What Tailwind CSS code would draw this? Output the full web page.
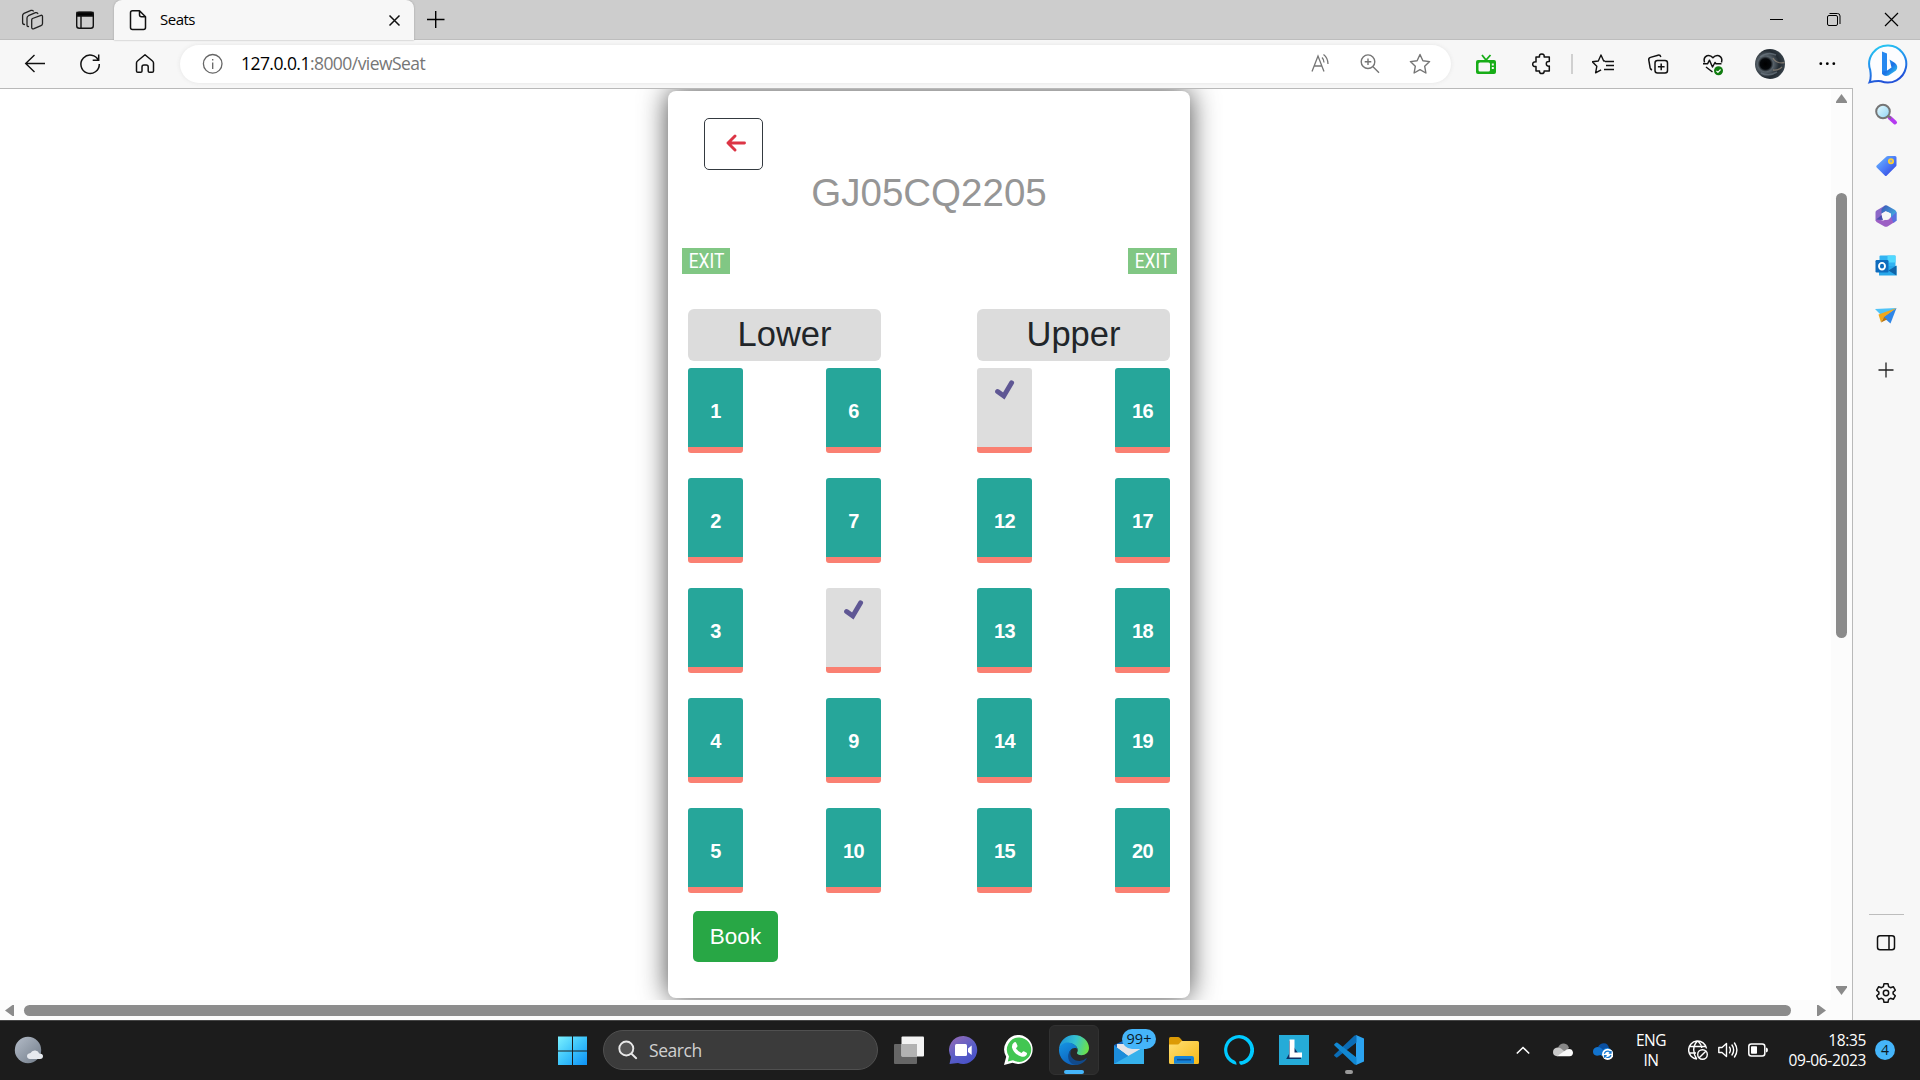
<!DOCTYPE html>
<html lang="en">
<head>
<meta charset="utf-8">
<title>Seats</title>
<script src="https://cdn.jsdelivr.net/npm/@tailwindcss/browser@4"></script>
</head>
<body class="w-[1920px] h-[1080px] overflow-hidden flex flex-col bg-[#f7f7f7] font-['Open_Sans','Noto_Sans',sans-serif] text-black">

<!-- Tab strip -->
<header class="h-10 shrink-0 flex items-center bg-[#cdcdcd] shadow-[inset_0_-1px_0_#bdbdbd]">
  <svg class="ml-5 size-6 shrink-0" viewBox="20 8 24 24" fill="none" stroke="#222" stroke-width="1.3" stroke-linejoin="round" stroke-linecap="round"><path d="M32.500 18.500 41 15.300Q42.500 15 42.500 16.500V23.500Q42.500 25 41 25.600L34 28.700Q31.700 29.300 31.700 27.500V20Q31.700 19 32.500 18.500ZM28.500 26.500Q27 26.800 27 25V18Q27 16.500 28.500 15.700L35.500 12.700Q37 12.200 37.800 13.500M24.500 24.500Q22.600 24.500 22.600 22.500V15.500Q22.600 14 24 13.300L31 10.400Q32.800 10 33.300 11"/></svg>
  <svg class="ml-[29px] size-6 shrink-0" viewBox="73 8 24 24" fill="none" stroke="#111" stroke-width="1.400"><rect x="76.700" y="12.200" width="16.600" height="16" rx="2.500"/><path d="M77 12.500h16v3.500H77z" fill="#000"/><path d="M81 16v12"/></svg>
  <div class="ml-[17px] w-[300px] h-10 flex items-center bg-[#f7f7f7] rounded-t-lg pl-3 pr-2 shadow-[0_0_2px_#999]">
    <svg class="size-6 shrink-0" viewBox="126 8 24 24" fill="none" stroke="#111" stroke-width="1.500" stroke-linejoin="round"><path d="M132.500 10.800h7l6 6V27.500q0 2-2 2h-11q-2 0-2-2V12.800q0-2 2-2ZM139.500 10.800v4q0 2 2 2h4"/></svg>
    <span class="ml-2.5 mb-0.5 text-[15px] leading-none tracking-[-0.5px]">Seats</span>
    <svg class="ml-auto size-6 shrink-0" viewBox="382 8 24 24" stroke="#111" stroke-width="1.500"><path d="m389.500 15.500 10 10m0-10-10 10"/></svg>
  </div>
  <svg class="ml-2.5 size-6 shrink-0" viewBox="424 8 24 24" stroke="#000" stroke-width="1.400"><path d="M427 19.500h17.500M435.700 11v17"/></svg>
  <div class="ml-auto mr-4 flex">
    <svg class="size-6" viewBox="1765 8 24 24" stroke="#000" stroke-width="1"><path d="M1770 19.500h13"/></svg>
    <svg class="ml-[33px] size-6" viewBox="1822 8 24 24" fill="none" stroke="#000" stroke-width="1"><rect x="1827.500" y="15.500" width="10" height="10" rx="1.500"/><path d="M1829.500 13.500h8q2.500 0 2.500 2.500v8"/></svg>
    <svg class="ml-[34px] size-6" viewBox="1880 8 24 24" stroke="#000" stroke-width="1.200"><path d="m1885 13 13 13m0-13-13 13"/></svg>
  </div>
</header>

<!-- Toolbar -->
<nav class="h-12 shrink-0 flex items-center pl-[23px]">
  <svg class="size-6 shrink-0" viewBox="23 52 24 24" fill="none" stroke="#111" stroke-width="1.400"><path d="M45 63.500H26M34.500 55l-8.800 8.500 8.800 8.500"/></svg>
  <svg class="ml-[31px] size-6 shrink-0" viewBox="78 52 24 24" fill="none" stroke="#111" stroke-width="1.500"><path d="M98.500 60.500A9.200 9.200 0 1 0 99.300 64M98.700 54.500v5.700h-6"/></svg>
  <svg class="ml-[31px] size-6 shrink-0" viewBox="133 52 24 24" fill="none" stroke="#111" stroke-width="1.500" stroke-linejoin="round"><path d="M145 54.700 137.500 61q-1 .8-1 2V71q0 1.300 1.300 1.300h3q1.200 0 1.200-1.300v-4q0-2 2-2h2.200q2 0 2 2v4q0 1.300 1.300 1.300h2.700q1.300 0 1.300-1.300v-8q0-1.200-1-2Z"/></svg>
  <div class="ml-[23px] w-[1271px] h-[38px] shrink-0 rounded-full bg-white flex items-center pl-[21px] pr-[19px] shadow-[0_0_4px_#e4e4e4]">
    <svg class="size-6 shrink-0" viewBox="201 52 24 24" fill="none" stroke="#666" stroke-width="1.300"><circle cx="212.700" cy="63.800" r="9.300"/><path d="M212.700 62.500v6.500M212.700 59v1.600"/></svg>
    <span class="ml-4 text-[17.500px] leading-none tracking-[-0.55px]">127.0.0.1<span class="text-[#767676]">:8000/viewSeat</span></span>
    <svg class="ml-auto size-6 shrink-0" viewBox="1309 52 24 24" fill="none" stroke="#757575" stroke-width="1.300"><path d="m1311.500 71.500 6-15.500 6 15.500M1313.700 66h7.600M1321.500 57.500q2 2 2 5M1323 54.500q4.500 3.500 4.500 9.500" transform="translate(.5 0)"/></svg>
    <svg class="ml-[25px] size-6 shrink-0" viewBox="1358 52 24 24" fill="none" stroke="#757575" stroke-width="1.400"><circle cx="1368" cy="61.700" r="6.800"/><path d="m1373 66.700 6 6M1368 58.500v6.500M1364.700 61.700h6.600"/></svg>
    <svg class="ml-[26px] size-6 shrink-0" viewBox="1408 52 24 24" fill="none" stroke="#757575" stroke-width="1.400" stroke-linejoin="round"><path d="m1420 54.500 2.900 6.200 6.700.9-4.900 4.700 1.200 6.700-5.900-3.300-5.900 3.300 1.200-6.700-4.900-4.700 6.700-.9Z"/></svg>
  </div>
  <svg class="ml-[23px] size-6 shrink-0" viewBox="1474 52 24 24"><path d="m1482 55 4 5 4.500-5" stroke="#17ad17" stroke-width="1.800" fill="none"/><rect x="1476" y="60" width="20" height="14" rx="2" fill="#17ad17"/><rect x="1478.500" y="62.500" width="11.500" height="9" rx="1.500" fill="#f7f7f7"/><path d="M1491.800 63.500h2v2h-2zm0 3.500h2v2h-2z" fill="#f7f7f7"/></svg>
  <svg class="ml-8 size-6 shrink-0" viewBox="1530 52 24 24" fill="none" stroke="#111" stroke-width="1.500" stroke-linejoin="round"><path d="M1536 57h3.500q-.6-3 2.300-3t2.300 3h5.200v4.500q-3-.3-3 2.300t3 2.300V71h-5.200q.3 2.500-2.300 2.500T1539.500 71H1536v-4.500q-3.300.3-3.300-2.300t3.300-2.300Z"/></svg>
  <i class="ml-[17px] w-0.5 h-5 shrink-0 bg-[#d0d0d0]"></i>
  <svg class="ml-[19px] size-6 shrink-0" viewBox="1592 52 24 24" fill="none" stroke="#111" stroke-width="1.400" stroke-linejoin="round"><path d="M1604.500 61h-1.300l-2.700-6-2.700 6-6 .8 4.500 4.500-1.200 6.500 5.500-3M1604.500 61.500h9M1605.500 65.500h8M1603.500 69.500h10" transform="translate(.5 0)"/></svg>
  <svg class="ml-[30px] size-6 shrink-0" viewBox="1646 52 24 24" fill="none" stroke="#111" stroke-width="1.500"><rect x="1655" y="60.500" width="12.500" height="12.500" rx="2.500"/><path d="M1661.200 63.500v6.700M1657.900 66.800h6.700M1652 70q-1.500-.7-1.900-2.300l-1.300-7.500q-.4-2.200 1.700-2.800l7.500-2.200q2.200-.5 2.800 1.800"/></svg>
  <svg class="ml-[31px] size-6 shrink-0" viewBox="1701 52 24 24" fill="none" stroke="#111" stroke-width="1.500" stroke-linejoin="round"><path d="M1704.500 62.500q-1.500-5 2.500-6.700 3.500-1 5.900 2 2.500-3 6-2 4 1.700 2.600 6.700M1703 63.800h4.500l2-3.600 3 6.800 2.500-4.500 1 1.300h5.500M1706 67l6.500 5"/><circle cx="1718.500" cy="70.700" r="4.500" fill="#107c10" stroke="none"/><path d="m1716.400 70.800 1.500 1.500 2.700-2.800" stroke="#fff" stroke-width="1.100"/></svg>
  <svg class="ml-[30px] size-[30px] shrink-0" viewBox="0 0 30 30"><defs><radialGradient id="av" cx=".35" cy=".5" r=".65"><stop offset="0" stop-color="#000"/><stop offset=".27" stop-color="#05080b"/><stop offset=".4" stop-color="#59636b"/><stop offset=".7" stop-color="#232b32"/><stop offset="1" stop-color="#39434b"/></radialGradient></defs><circle cx="15" cy="15" r="15" fill="url(#av)"/><path d="M18 9q3 6 11.500 4.500M18 21q5 1 9-3" stroke="#9a8d7d" stroke-width="1.300" fill="none" opacity=".7"/><path d="M5 8q8-6 16-2M6 24q8 4 16-1" stroke="#75818a" stroke-width="1.500" fill="none" opacity=".6"/></svg>
  <svg class="ml-[31px] size-6 shrink-0" viewBox="1816 52 24 24"><circle cx="1820.800" cy="63.700" r="1.400"/><circle cx="1827.300" cy="63.700" r="1.400"/><circle cx="1833.800" cy="63.700" r="1.400"/></svg>
  <svg class="ml-[27px] w-[42px] h-[42px] shrink-0" viewBox="1866 43 42 42"><defs><linearGradient id="bo" x1="0" y1="0" x2=".3" y2="1"><stop offset="0" stop-color="#29d0f2"/><stop offset=".5" stop-color="#2193ee"/><stop offset="1" stop-color="#2252d8"/></linearGradient><linearGradient id="bb" x1="0" y1="0" x2="1" y2="1"><stop offset="0" stop-color="#35b4f4"/><stop offset=".5" stop-color="#1b6fe6"/><stop offset="1" stop-color="#38dcee"/></linearGradient></defs><path d="M1887.500 45.500A18.500 18.500 0 1 1 1880 81.200Q1876 80.500 1868.500 82.300 1870.500 78 1869.200 70A18.500 18.500 0 0 1 1887.500 45.500Z" fill="#fdfdff" stroke="url(#bo)" stroke-width="2"/><path d="m1881 51.500 5 2v18.500l-5 2.500Z" fill="#2788f0"/><path d="m1888.500 59.500 5.500 3.500q4 3.500 1 7.500l-7.500 5q-5 1.500-6.500-2.500v-2.500l4.500 .5 5-3.500Z" fill="url(#bb)"/></svg>
</nav>

<!-- Browser body -->
<main class="h-[932px] shrink-0 flex">
  <section class="w-[1853px] shrink-0 flex flex-col border-t border-r border-[#b9b9b9] bg-[#fcfcfc]">
    <div class="h-[911px] flex">
      <!-- Page viewport -->
      <div class="w-[1831px] h-[911px] bg-white overflow-hidden font-['Liberation_Sans',Arial,sans-serif]">
        <div class="ml-[668px] mt-0.5 w-[522px] h-[907px] rounded-lg bg-white shadow-[0_0_28px_rgba(0,0,0,0.72)] flex flex-col">
          <button class="ml-9 mt-[27px] w-[59px] h-[52px] shrink-0 rounded-[5px] border border-[#343a40] flex items-center justify-center">
            <svg class="ml-[5px] mb-[3px] w-5 h-[18px]" viewBox="0 0 20 18" fill="none" stroke="#dc3545" stroke-width="2.900" stroke-linecap="round" stroke-linejoin="round"><path d="M18.500 9H2M9 2 2 9l7 7"/></svg>
          </button>
          <h1 class="text-center text-[38.500px] leading-[46px] text-[#969696]">GJ05CQ2205</h1>
          <div class="mt-[32px] ml-[14px] mr-[13px] flex justify-between text-white font-[Roboto] text-xl">
            <span class="w-12 h-[26px] bg-[#81c784] flex items-center justify-center"><span class="scale-x-[0.87]">EXIT</span></span>
            <span class="w-[49px] h-[26px] bg-[#81c784] flex items-center justify-center"><span class="scale-x-[0.87]">EXIT</span></span>
          </div>
          <div class="mt-[35px] mx-5 flex justify-between text-center text-[34.500px] text-[#212529]">
            <h2 class="w-[193px] h-[52px] rounded-md bg-[#dcdcdc] leading-[50px]">Lower</h2>
            <h2 class="w-[193px] h-[52px] rounded-md bg-[#dcdcdc] leading-[50px]">Upper</h2>
          </div>
          <ol class="mt-[7px] mx-5 grid grid-cols-[138px_151px_138px_55px] gap-y-[25px] text-xl tracking-[-0.6px] font-bold text-white text-center leading-[86px] [&>li]:w-[55px] [&>li]:h-[85px] [&>li]:rounded-[3px] [&>li]:border-b-6 [&>li]:border-[#fa8072]">
            <li class="bg-[#26a69a]">1</li><li class="bg-[#26a69a]">6</li>
            <li class="bg-[#dddddd]"><svg class="mx-auto mt-3 w-5 h-5" viewBox="0 0 20 20" fill="none" stroke="#5f5794" stroke-width="4.900" stroke-linecap="round" stroke-linejoin="miter"><path d="M2.600 11.500 8.800 16 16.600 2.800"/></svg></li>
            <li class="bg-[#26a69a]">16</li>
            <li class="bg-[#26a69a]">2</li><li class="bg-[#26a69a]">7</li><li class="bg-[#26a69a]">12</li><li class="bg-[#26a69a]">17</li>
            <li class="bg-[#26a69a]">3</li>
            <li class="bg-[#dddddd]"><svg class="mx-auto mt-3 w-5 h-5" viewBox="0 0 20 20" fill="none" stroke="#5f5794" stroke-width="4.900" stroke-linecap="round" stroke-linejoin="miter"><path d="M2.600 11.500 8.800 16 16.600 2.800"/></svg></li>
            <li class="bg-[#26a69a]">13</li><li class="bg-[#26a69a]">18</li>
            <li class="bg-[#26a69a]">4</li><li class="bg-[#26a69a]">9</li><li class="bg-[#26a69a]">14</li><li class="bg-[#26a69a]">19</li>
            <li class="bg-[#26a69a]">5</li><li class="bg-[#26a69a]">10</li><li class="bg-[#26a69a]">15</li><li class="bg-[#26a69a]">20</li>
          </ol>
          <button class="ml-[25px] mt-[18px] w-[85px] h-[51px] shrink-0 rounded-[5px] bg-[#28a745] text-white text-[22.500px] leading-none pt-0.5">Book</button>
        </div>
      </div>
      <!-- Vertical scrollbar -->
      <div class="w-[21px] flex flex-col items-center pt-[5px] pb-[5px]">
        <svg class="w-[11px] h-[9px]" viewBox="0 0 11 9" fill="#8b8b8b"><path d="M5.500 0 11 7.500V9H0V7.500Z"/></svg>
        <div class="mt-[90px] w-[11px] h-[445px] rounded-full bg-[#8b8b8b]"></div>
        <svg class="mt-auto w-[11px] h-[9px]" viewBox="0 0 11 9" fill="#8b8b8b"><path d="M5.500 9 11 1.500V0H0V1.500Z"/></svg>
      </div>
    </div>
    <!-- Horizontal scrollbar -->
    <div class="h-5 flex items-center pl-[5px]">
      <svg class="w-[9px] h-[11px]" viewBox="0 0 9 11" fill="#8b8b8b"><path d="M0 5.500 7.500 0H9V11H7.500Z"/></svg>
      <div class="ml-2.5 w-[1767px] h-[11px] rounded-full bg-[#8b8b8b]"></div>
      <svg class="ml-[26px] w-[9px] h-[11px]" viewBox="0 0 9 11" fill="#8b8b8b"><path d="M9 5.500 1.500 0H0V11H1.500Z"/></svg>
    </div>
  </section>

  <!-- Sidebar -->
  <aside class="w-[67px] flex flex-col items-center pt-[14px] pr-0.5">
    <svg class="size-6" viewBox="0 0 24 24"><defs><linearGradient id="m1" x1="0" y1="0" x2="1" y2="1"><stop offset="0" stop-color="#e9fbff"/><stop offset="1" stop-color="#8fd3f5"/></linearGradient></defs><path d="m15.500 15.500 5.500 5" stroke="#b53af0" stroke-width="4" stroke-linecap="round"/><path d="m14.500 14 2.500 2.500" stroke="#777" stroke-width="2"/><circle cx="9" cy="9.500" r="6.800" fill="url(#m1)" stroke="#757575" stroke-width="2"/></svg>
    <svg class="mt-[28px] size-6" viewBox="0 0 24 24"><defs><linearGradient id="tg" x1="0" y1="0" x2="1" y2="1"><stop offset="0" stop-color="#6fc0ff"/><stop offset=".5" stop-color="#4c7df8"/><stop offset="1" stop-color="#3038d8"/></linearGradient></defs><path d="M12.500 2.500Q13 2 14 2h7q1.500 0 1.500 1.500V11q0 1-.7 1.600l-9 9q-1 1-2 0L2.700 13.500q-1-1 0-2Z" fill="url(#tg)"/><circle cx="17" cy="7.200" r="2.200" fill="#9ca8c0" stroke="#ffd02e" stroke-width="1.700"/></svg>
    <svg class="mt-[26px] size-6" viewBox="0 0 24 24"><defs><linearGradient id="o1" x1="0" y1="0" x2="1" y2="1"><stop offset="0" stop-color="#3a56b5"/><stop offset="1" stop-color="#45c5ee"/></linearGradient></defs><path d="M11 1.500 2.500 6.500Q1.500 7 1.500 8.500v8l6 3.500V9.500L15 5Z" fill="#8c68c8"/><path d="M11 1.500q1-.5 2 0L21 6q1.500 1 1.500 2.500V17L17 13.500V9.500L11.500 7l-4 2.500V5Z" fill="url(#o1)"/><path d="M22.500 16q-.3 1-1.500 1.700L13.500 22.500q-1.500.7-3 0L2.500 18l-1-2 8 .500 8-3.500Z" fill="#9c5fc4"/><path d="M2 15.500 9 16l-1.500-5L4 14Z" fill="#4c4fae"/><path d="M17 13 22.500 8v8.500l-3 2.500Z" fill="#5a70e0"/><circle cx="12.300" cy="12" r="4" fill="#f7f7f7"/></svg>
    <svg class="mt-[26px] size-6" viewBox="0 0 24 24"><rect x="5.500" y="1.500" width="16" height="14" rx="1" fill="#31b3f2"/><path d="M13.500 1.500h8v7h-8z" fill="#50d9ff"/><path d="M5 12h17.500v9.500H5z" fill="#28a8ea"/><path d="m22.500 11.500-8 5 8 5Z" fill="#1064a8"/><rect x="1.500" y="6" width="13" height="12.500" rx="1.200" fill="#0f6cbd"/><ellipse cx="8" cy="12.200" rx="3" ry="3.300" fill="none" stroke="#fff" stroke-width="1.900"/></svg>
    <svg class="mt-[26px] size-6" viewBox="0 0 24 24"><path d="M1 5 22.500 4 9 13Z" fill="#4fc3f7"/><path d="M22.500 4 9 13l7.500 6.500Z" fill="#2f86e8"/><path d="M22.500 4 4.500 10.500 7 18.500 10 13Z" fill="#f0a81c"/><path d="M7 18.500 10 13l3 2.500Z" fill="#b87410"/></svg>
    <svg class="mt-[30px] size-6" viewBox="0 0 24 24" stroke="#222" stroke-width="1.300"><path d="M4.500 12h15M12 4.500v15"/></svg>
    <i class="mt-[532px] w-[35px] h-px ml-0.5 bg-[#bdbdbd]"></i>
    <svg class="mt-4 size-6" viewBox="0 0 24 24" fill="none" stroke="#111" stroke-width="1.500"><rect x="3.500" y="4.700" width="17" height="14" rx="2.500"/><path d="M15 4.700v14"/></svg>
    <svg class="mt-[26px] size-6" viewBox="0 0 24 24" fill="none" stroke="#111" stroke-width="1.500" stroke-linejoin="round"><circle cx="12" cy="12" r="2.700"/><path d="M10 2.700h4l.6 2.900 1.900 1.100 2.800-1 2 3.500-2.200 1.900v1.800l2.200 1.900-2 3.500-2.800-1-1.900 1.100-.6 2.900h-4l-.6-2.900-1.900-1.100-2.800 1-2-3.500 2.200-1.900v-1.800L2.700 9.200l2-3.500 2.800 1 1.900-1.100Z"/></svg>
  </aside>
</main>

<!-- Taskbar -->
<footer class="h-[60px] shrink-0 flex items-center bg-[#1c1c1c] shadow-[inset_0_1px_0_#454545] text-white">
  <svg class="ml-[14px] size-[30px] shrink-0" viewBox="0 0 30 30"><defs><linearGradient id="w1" x1="0" y1="0" x2="1" y2="1"><stop offset="0" stop-color="#b4bcc8"/><stop offset="1" stop-color="#717c89"/></linearGradient></defs><circle cx="14" cy="15" r="13.200" fill="url(#w1)"/><path d="M16 24q-3-.5-3-3t3.500-3q1.500-3 5-2.500 3 .3 3.700 3 3.800 0 3.800 2.800 0 2.500-3 2.700Z" fill="#e6e9ee"/></svg>
  <svg class="ml-[514px] size-[30px] shrink-0" viewBox="0 0 30 30"><defs><linearGradient id="wn" gradientUnits="userSpaceOnUse" x1="0" y1="0" x2="30" y2="30"><stop offset="0" stop-color="#7ff3ff"/><stop offset=".5" stop-color="#3cc4fb"/><stop offset="1" stop-color="#0c8ff5"/></linearGradient></defs><path d="M0 1.500h14v14H0zM15 1.500h14v14H15zM0 16.500h14v13.500H0zM15 16.500h14v13.500H15z" fill="url(#wn)"/></svg>
  <div class="ml-[15px] w-[275px] h-10 shrink-0 rounded-full bg-[#3b3b3b] border border-[#505050] flex items-center pl-3.5">
    <svg class="size-5 shrink-0" viewBox="0 0 20 20" fill="none" stroke="#e8e8e8" stroke-width="1.900" stroke-linecap="round"><circle cx="8.300" cy="8.500" r="7" fill="#555"/><path d="m13.500 13.700 4.700 4.500"/></svg>
    <span class="ml-[11px] mt-0.5 text-[17.500px] leading-none tracking-[-0.45px] text-[#d0d0d0]">Search</span>
  </div>
  <svg class="ml-4 size-[30px] shrink-0" viewBox="0 0 30 30"><rect x="0" y="9" width="23" height="20" rx="1" fill="#666"/><rect x="7.500" y="1.500" width="22.500" height="20" rx="1" fill="#f4f4f4"/><path d="M7.500 9H23v12.500H7.500z" fill="#b3b3b3"/></svg>
  <svg class="ml-[25px] size-[30px] shrink-0" viewBox="0 0 30 30"><defs><linearGradient id="ch" x1="0" y1="0" x2=".6" y2="1"><stop offset="0" stop-color="#9a6bb4"/><stop offset=".6" stop-color="#5b5fc7"/><stop offset="1" stop-color="#4a52c8"/></linearGradient></defs><path d="M14.500 1A14 14 0 1 1 9 28L.5 29 2 22A14 14 0 0 1 14.500 1Z" fill="url(#ch)"/><rect x="6" y="9" width="12" height="12" rx="1.500" fill="#fff"/><path d="M19 13.500 22.700 10.500V20L19 17Z" fill="#fff"/></svg>
  <svg class="ml-[25px] size-[30px] shrink-0" viewBox="0 0 30 30"><path d="M15.500 0A14.500 14.500 0 1 1 8.500 27.800L0 30 2.200 21.800A14.500 14.500 0 0 1 15.500 0Z" fill="#fff"/><path d="M15.500 2.500A12.200 12.200 0 1 1 9 25.300L3.800 26.500 5 21.500A12.200 12.200 0 0 1 15.500 2.500Z" fill="#42c652"/><path d="M10 7.500q1.500-1 2.300.5l1.200 2.700q.2.800-1.500 2.500 2 3.600 5.500 4.800 1.500-2 2.300-1.700l2.800 1.400q1 .8-.2 2.500-1.800 2.200-4.500 1.500Q10 19.500 8 12.500 7.700 9 10 7.500Z" fill="#fff"/></svg>
  <div class="relative ml-[15px] size-[50px] shrink-0 rounded-md bg-[#292929] border border-[#313131] flex items-center justify-center">
    <svg class="size-[30px]" viewBox="0 0 30 30"><defs><linearGradient id="e1" x1="0" y1=".2" x2="1" y2=".4"><stop offset="0" stop-color="#1b8fdc"/><stop offset=".55" stop-color="#36c3d0"/><stop offset="1" stop-color="#6be04c"/></linearGradient><linearGradient id="e2" x1="0" y1="0" x2=".5" y2="1"><stop offset="0" stop-color="#1595e4"/><stop offset="1" stop-color="#0e63bd"/></linearGradient></defs><path d="M0 14A15 15 0 0 1 15 0C24 0 30 6.500 30 13c0 4.500-3.500 7.200-7.500 7.200-3 0-5-1.200-4.500-2.500 1.200-1.500 1-4-.5-6C12 5.500 4 7.500 0 14Z" fill="url(#e1)"/><path d="M0 14C2 8.500 6.500 7.200 10.500 7.700c4 .5 7.500 3.500 8 6.500-1-1.500-5-2-7.500 1.500-3 5.500 1.500 13.500 8.500 13.500Q17 30 15 30A15 15 0 0 1 0 14Z" fill="url(#e2)"/><path d="M12.500 14.500C9 20 14 26 20.500 26q4 0 7-3c.700.300-.500 2-1.500 3C22 30 17 30.500 14.500 29.500 8 27 7.500 18 12.500 14.500Z" fill="#114a8b"/></svg>
    <i class="absolute left-[14px] bottom-0 w-5 h-1 rounded-full bg-[#45b5fa]"></i>
  </div>
  <div class="relative ml-[15px] size-[30px] shrink-0">
    <svg class="size-[30px]" viewBox="0 0 30 30"><path d="M0 10 15 3l15 7v4H0Z" fill="#1462b8"/><path d="M3 9h24v8l-12 5L3 13Z" fill="#e4e4e8"/><path d="M0 10.500 15 22 30 12v17H0Z" fill="#2aa5e6"/><path d="M0 29 15 21.500 0 10.500Z" fill="#1c8ddb"/><path d="M0 29 30 12v17Z" fill="#36b1ec"/></svg>
    <span class="absolute left-2 -top-1.5 w-[34px] h-5 rounded-full bg-[#45b5fa] text-[#0b1a26] text-[14.500px] leading-5 text-center">99+</span>
  </div>
  <svg class="ml-[25px] size-[30px] shrink-0" viewBox="0 0 30 30"><defs><linearGradient id="f1" x1="0" y1="0" x2="1" y2="1"><stop offset="0" stop-color="#ffdf74"/><stop offset="1" stop-color="#f7b916"/></linearGradient></defs><path d="M0 3.500Q0 2 1.500 2H9q1 0 2 1l2.500 3-4 4H0Z" fill="#dc9a05"/><path d="M0 9.500h8.500q1 0 2-1.300L12.500 6H28.500Q30 6 30 7.500v20Q30 29 28.500 29h-27Q0 29 0 27.500Z" fill="url(#f1)"/><path d="M5 28.800V23q0-2 2-2h16q2 0 2 2v5.800Z" fill="#1583d8"/><path d="M8 24.700h14" stroke="#0b4f94" stroke-width="1.600"/></svg>
  <svg class="ml-[25px] size-[30px] shrink-0" viewBox="0 0 30 30"><path fill-rule="evenodd" d="M12.500 29.800A15 15 0 1 1 17 29.900Q14.500 28.500 15.500 26.300A11.500 11.500 0 1 0 10.500 25.500Q12.800 27 12.500 29.800Z" fill="#00caff"/></svg>
  <svg class="ml-[25px] size-[30px] shrink-0" viewBox="0 0 30 30"><path d="M0 0h30v30H0z" fill="#25abd8"/><path d="M10 5v14l-2.800 5H22v-1.500Z" fill="#0c2f63"/><path d="M10.500 4.500h5v13H23v5H10.500Z" fill="#fff"/></svg>
  <div class="relative ml-[25px] size-[30px] shrink-0">
    <svg class="size-[30px]" viewBox="0 0 30 30"><path d="M22 0 30 3.500v23L22 30Z" fill="#2ba3f0"/><path d="M22.500 7.500 3.500 22.300Q2.700 23 2 22.300L.5 21q-.8-.8 0-1.500L20 1Q21 0 22.500.5Z" fill="#0b6cb5"/><path d="M22.500 22.500 3.500 7.800Q2.700 7 2 7.800L.5 9q-.8.8 0 1.500L20 29q1 1 2.500.5Z" fill="#1288d2"/></svg>
    <i class="absolute left-[11px] -bottom-[9px] w-2 h-1 rounded-full bg-[#9a9a9a]"></i>
  </div>

  <div class="ml-auto mr-[25px] flex items-center">
    <svg class="w-[14px] h-[9px]" viewBox="0 0 14 9" fill="none" stroke="#fff" stroke-width="1.600"><path d="m.8 7.500 6.200-6 6.200 6"/></svg>
    <svg class="ml-[23px] w-5 h-5" viewBox="0 0 20 20"><path d="M5 7.500Q7 3.200 11 3.500t5 4.500l-5 4Z" fill="#878787"/><path d="M4 16.200Q0 16 0 12t4.500-4.500q2 0 3.500 1l6 5Z" fill="#c9c9c9"/><path d="M4 16.200 14 9.300q5-1.600 6 3 0 3.900-3.500 3.900Z" fill="#fafafa"/></svg>
    <svg class="ml-5 w-5 h-5" viewBox="0 0 20 20"><path d="M5 7Q7 3.200 11 3.300t5 4.700l-5 4Z" fill="#0a4fa0"/><path d="M4 15.700Q0 15.500 0 11.500T4.500 7q2 0 3.500 1l6 6Z" fill="#1273ce"/><path d="M8 15.700 11 9q6-3 8.500 3v3.500Z" fill="#1b8bea"/><circle cx="14.700" cy="14.300" r="5.600" fill="#fff"/><path d="M11.300 13.800q1-3 4-2.700 1.800.3 2.700 1.700M18 11v2.200h-2.200M18 15q-1 2.700-3.800 2.500-1.700-.3-2.600-1.700M11.500 17.700v-2.200h2.200" fill="none" stroke="#1478d0" stroke-width="1.200"/></svg>
    <div class="ml-[22px] w-[32px] text-center text-[15.500px] leading-5 tracking-[-0.5px]">ENG<br>IN</div>
    <svg class="ml-[21px] w-5 h-5" viewBox="0 0 20 20" fill="none" stroke="#fff" stroke-width="1.400"><path d="M18.500 8.500A9 9 0 1 0 9 19M1.500 6.500h16.500M1.500 13H8M9.700 1Q5.500 5 5.700 10t3 9M9.800 1q3.500 3 4 7"/><circle cx="14.500" cy="14.500" r="4.800"/><path d="m11.200 17.800 6.600-6.600"/></svg>
    <svg class="ml-2.5 w-5 h-5" viewBox="0 0 20 20" fill="none" stroke="#fff" stroke-width="1.400" stroke-linejoin="round" stroke-linecap="round"><path d="M.8 7.500H4L8.500 3.500v13L4 12.500H.8ZM11.500 7.200q1.800 2.800 0 5.600M14 5q3.300 5 0 10M16.500 3q4.800 7 0 14"/></svg>
    <svg class="ml-2.5 w-5 h-5" viewBox="0 0 20 20"><rect x=".8" y="4" width="16" height="12" rx="2.500" fill="none" stroke="#fff" stroke-width="1.500"/><rect x="3" y="6.200" width="6" height="7.600" rx=".7" fill="#fff"/><path d="M18 7.500q2 .3 2 2.500t-2 2.500Z" fill="#fff"/></svg>
    <div class="ml-4 w-[82px] text-right text-[15.500px] leading-5 tracking-[-0.35px] whitespace-nowrap">18:35<br>09-06-2023</div>
    <span class="ml-[9px] size-5 rounded-full bg-[#45b5fa] text-[#0b1a26] text-[14px] leading-5 text-center">4</span>
  </div>
</footer>
</body>
</html>
